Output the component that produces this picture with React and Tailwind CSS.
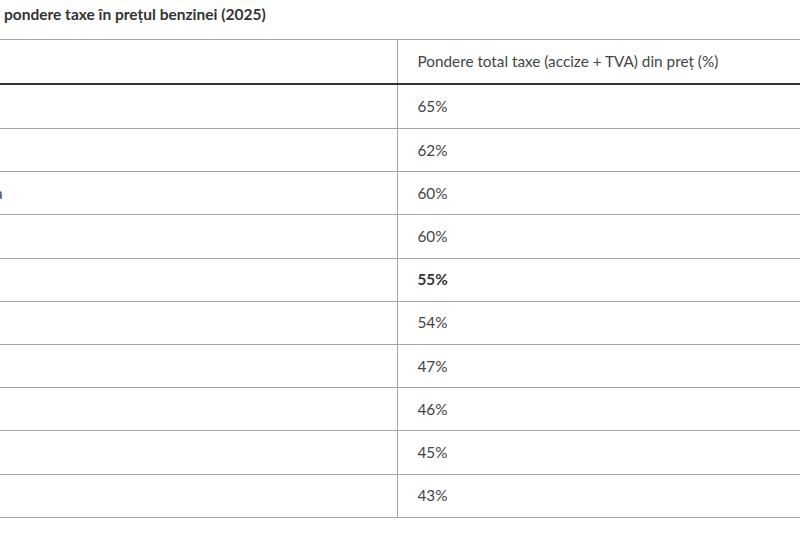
const rows = [
	{ name: '', value: '65%' },
	{ name: '', value: '62%' },
	{ name: 'a', value: '60%' },
	{ name: '', value: '60%' },
	{ name: '', value: '55%', bold: true },
	{ name: '', value: '54%' },
	{ name: '', value: '47%' },
	{ name: '', value: '46%' },
	{ name: '', value: '45%' },
	{ name: '', value: '43%' },
];

export default function App() {
	return (
		<div className="w-[800px] h-[534px] overflow-hidden bg-white text-[#444]" style={{ fontFamily: 'Lato, "Open Sans", sans-serif' }}>
			<h2 className="pl-[4px] pt-[3px] h-[39px] text-[15.5px] leading-[22px] font-bold text-[#333]">
				pondere taxe în prețul benzinei (2025)
			</h2>
			<table className="w-full border-collapse border-t border-[#a6a6a6] text-[15.3px]">
				<thead>
					<tr className="h-[44px] border-b-2 border-[#333]">
						<th className="w-[397px] border-r border-[#a6a6a6] p-0" />
						<th className="pl-[20px] text-left font-normal p-0">Pondere total taxe (accize + TVA) din preț (%)</th>
					</tr>
				</thead>
				<tbody>
					{rows.map((r, i) => (
						<tr key={i} className={`${i === 0 ? 'h-[45px]' : 'h-[43.2px]'} border-b border-[#a6a6a6]`}>
							<td className="w-[397px] border-r border-[#a6a6a6] p-0 text-left">
								{r.name && <span className="ml-[-5px]">{r.name}</span>}
							</td>
							<td className={`pl-[20px] p-0 ${r.bold ? 'font-bold text-[#333]' : ''}`}>{r.value}</td>
						</tr>
					))}
				</tbody>
			</table>
		</div>
	);
}
